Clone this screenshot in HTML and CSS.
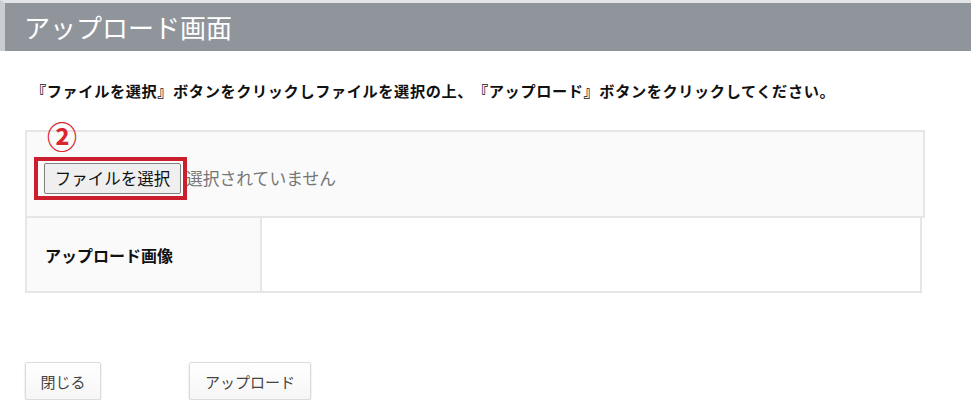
FILE: index.html
```html
<!DOCTYPE html>
<html lang="ja">
<head>
<meta charset="utf-8">
<title>アップロード画面</title>
<link rel="stylesheet" href="styles.css">
</head>
<body>
<header class="page-header">アップロード画面</header>
<p class="instruction">『ファイルを選択』ボタンをクリックしファイルを選択の上、『アップロード』ボタンをクリックしてください。</p>
<div class="form-table">
  <div class="file-row">
    <span class="step-mark">②</span>
    <span class="highlight"></span>
    <button class="file-btn" type="button">ファイルを選択</button>
    <span class="file-status">選択されていません</span>
  </div>
  <div class="image-row">
    <div class="label-cell">アップロード画像</div>
    <div class="value-cell"></div>
  </div>
</div>
<div class="actions">
  <button class="action-btn close-btn" type="button">閉じる</button>
  <button class="action-btn upload-btn" type="button">アップロード</button>
</div>
</body>
</html>
```
FILE: styles.css
```css
html, body {
  margin: 0;
  padding: 0;
  background: #ffffff;
}
body {
  font-family: "Noto Sans CJK JP", "Noto Sans", sans-serif;
  color: #222;
  width: 971px;
  text-spacing-trim: space-all;
}
.page-header {
  box-sizing: border-box;
  height: 51px;
  border-top: 3px solid #e2e4e7;
  border-left: 5px solid #caced2;
  background: #90959b;
  color: #ffffff;
  font-size: 26px;
  line-height: 48px;
  padding-left: 19px;
  font-weight: 400;
}
.instruction {
  margin: 29px 0 0 31px;
  font-size: 15.2px;
  line-height: 20px;
  font-weight: 700;
  color: #111;
  letter-spacing: 0.6px;
  white-space: nowrap;
}
.form-table {
  margin: 30px 0 0 25px;
}
.file-row {
  position: relative;
  box-sizing: border-box;
  width: 900px;
  height: 88px;
  border: 2px solid #e6e6e6;
  background: #fafafa;
  padding: 31px 0 0 17px;
  display: flex;
  align-items: flex-start;
}
.step-mark {
  position: absolute;
  left: 20px;
  top: -14px;
  color: #d9262f;
  font-size: 30px;
  line-height: 34px;
  font-weight: 700;
}
.highlight {
  position: absolute;
  left: 7px;
  top: 25px;
  width: 153px;
  height: 43px;
  box-sizing: border-box;
  border: 4px solid #cc1f2d;
}
.file-btn {
  box-sizing: border-box;
  height: 31px;
  width: 137px;
  padding: 0;
  margin: 0;
  font-family: inherit;
  font-size: 16.5px;
  line-height: 29px;
  color: #111;
  background: #efefef;
  border: 1px solid #808080;
  border-radius: 2px;
}
.file-status {
  margin-left: 5px;
  font-size: 16.8px;
  line-height: 31px;
  color: #767676;
}
.image-row {
  box-sizing: border-box;
  width: 897px;
  height: 75px;
  display: flex;
  border: 2px solid #e6e6e6;
  border-top: none;
}
.label-cell {
  box-sizing: border-box;
  width: 235px;
  background: #fafafa;
  border-right: 2px solid #e6e6e6;
  padding-left: 18px;
  display: flex;
  align-items: center;
  font-size: 16px;
  font-weight: 700;
  color: #111;
}
.value-cell {
  flex: 1;
  background: #ffffff;
}
.actions {
  margin: 69px 0 0 25px;
  display: flex;
  gap: 88px;
}
.action-btn {
  box-sizing: border-box;
  height: 38px;
  padding: 0;
  margin: 0;
  font-family: inherit;
  font-size: 15px;
  color: #444;
  background: linear-gradient(#ffffff, #f6f6f6);
  border: 1px solid #dcdcdc;
  border-radius: 2px;
  box-shadow: 0 1px 2px rgba(0, 0, 0, 0.18);
}
.close-btn {
  width: 76px;
}
.upload-btn {
  width: 122px;
}
```
